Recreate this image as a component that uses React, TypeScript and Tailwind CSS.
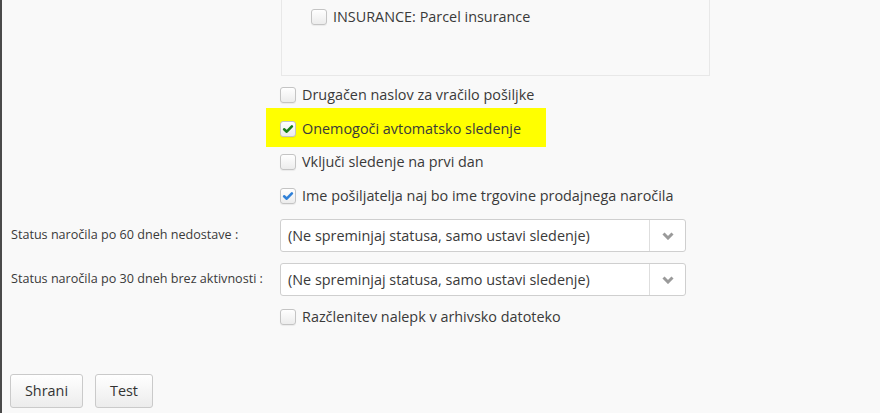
import React from "react"

function Check({ color }: { color: string }) {
    return (
        <svg viewBox="0 0 16 16" className="h-[12px] w-[12px]">
            <path d="M2.8 8.4 L6.3 11.6 L13.2 4.4" fill="none" stroke={color} strokeWidth="3.4" strokeLinecap="round" strokeLinejoin="round" />
        </svg>
    )
}

function Box({ checked, color }: { checked?: boolean; color?: string }) {
    return (
        <span className="flex h-[16px] w-[16px] shrink-0 items-center justify-center rounded-[3px] border border-[#c4c4c4] bg-gradient-to-b from-white to-[#ececec] shadow-[0_1px_1px_rgba(0,0,0,0.06)]">
            {checked && <Check color={color ?? "#2f80d8"} />}
        </span>
    )
}

function CheckRow({ label, checked, color, className = "" }: { label: string; checked?: boolean; color?: string; className?: string }) {
    return (
        <div className={"flex h-[24px] items-center gap-[6px] " + className}>
            <Box checked={checked} color={color} />
            <span className="text-[14.4px] text-[#3a3a3a]">{label}</span>
        </div>
    )
}

function Select({ value }: { value: string }) {
    return (
        <div className="flex h-[33px] w-[406px] items-center rounded-[3px] border border-[#cfcfcf] bg-white">
            <span className="flex-1 pl-[7px] text-[14.4px] text-[#3a3a3a]">{value}</span>
            <span className="flex h-full w-[36px] items-center justify-center border-l border-[#dedede]">
                <svg viewBox="0 0 12 8" className="h-[8px] w-[12px]">
                    <path d="M1.5 1.5 L6 6 L10.5 1.5" fill="none" stroke="#9a9a9a" strokeWidth="3" />
                </svg>
            </span>
        </div>
    )
}

export default function App() {
    return (
        <div className="h-[413px] w-[880px] overflow-hidden border-l-2 border-[#4a4a4a] bg-[#f9f9f9] font-['Open_Sans',sans-serif]">
            <div className="ml-[279px] h-[76px] w-[429px] border-x border-b border-[#e8e8e8] pl-[29px] pt-[5px]">
                <CheckRow label="INSURANCE: Parcel insurance" className="h-[17px]" />
            </div>

            <div className="ml-[278px]">
                <CheckRow label="Drugačen naslov za vračilo pošiljke" className="mt-[7px]" />
                <div className="-ml-[14px] mt-[1px] flex h-[39px] w-[280px] items-center bg-[#ffff00] pl-[14px] pt-[3px]">
                    <CheckRow label="Onemogoči avtomatsko sledenje" checked color="#1a7f1a" />
                </div>
                <CheckRow label="Vključi sledenje na prvi dan" className="mt-[3px]" />
                <CheckRow label="Ime pošiljatelja naj bo ime trgovine prodajnega naročila" checked className="mt-[10px]" />
            </div>

            <div className="mt-[11px] flex items-center">
                <span className="w-[278px] pl-[9px] text-[12.6px] text-[#3a3a3a]">Status naročila po 60 dneh nedostave :</span>
                <Select value="(Ne spreminjaj statusa, samo ustavi sledenje)" />
            </div>
            <div className="mt-[11px] flex items-center">
                <span className="w-[278px] pl-[9px] text-[12.6px] text-[#3a3a3a]">Status naročila po 30 dneh brez aktivnosti :</span>
                <Select value="(Ne spreminjaj statusa, samo ustavi sledenje)" />
            </div>

            <div className="ml-[278px]">
                <CheckRow label="Razčlenitev nalepk v arhivsko datoteko" className="mt-[9px]" />
            </div>

            <div className="ml-[8px] mt-[45px] flex gap-[12px]">
                <button className="h-[34px] w-[73px] rounded-[3px] border border-[#cacaca] bg-gradient-to-b from-white to-[#ececec] text-[14.4px] text-[#333]">Shrani</button>
                <button className="h-[34px] w-[58px] rounded-[3px] border border-[#cacaca] bg-gradient-to-b from-white to-[#ececec] text-[14.4px] text-[#333]">Test</button>
            </div>
        </div>
    )
}
